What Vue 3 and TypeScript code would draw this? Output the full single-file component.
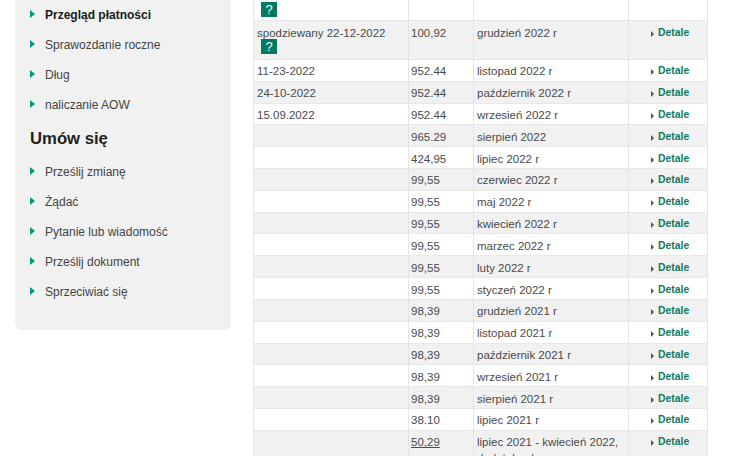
<template>
  <div class="page">
    <div class="scrolled">
      <aside class="side">
        <ul class="menu">
          <li v-for="item in overview" :key="item" :class="{ current: item === 'Przegląd płatności' }">{{ item }}</li>
        </ul>
        <h2>Umów się</h2>
        <ul class="menu">
          <li v-for="item in actions" :key="item">{{ item }}</li>
        </ul>
      </aside>
      <div class="payments">
        <div v-for="(row, i) in rows" :key="i" class="row" :class="{ tall: row.help }">
          <div class="cell">
            {{ row.date }}
            <span v-if="row.help" class="help">?</span>
          </div>
          <div class="cell amount"><span :class="{ under: row.under }">{{ row.amount }}</span></div>
          <div class="cell">{{ row.month }}</div>
          <div class="cell more"><a href="#">Detale</a></div>
        </div>
      </div>
    </div>
  </div>
</template>

<script setup lang="ts">
interface Row {
  date: string;
  amount: string;
  month: string;
  help?: boolean;
  under?: boolean;
}

const overview = ["Przegląd płatności", "Sprawozdanie roczne", "Dług", "naliczanie AOW"];
const actions = ["Prześlij zmianę", "Żądać", "Pytanie lub wiadomość", "Prześlij dokument", "Sprzeciwiać się"];

const rows: Row[] = [
  { date: "spodziewany 24-01-2023", amount: "", month: "", help: true },
  { date: "spodziewany 22-12-2022", amount: "100,92", month: "grudzień 2022 r", help: true },
  { date: "11-23-2022", amount: "952.44", month: "listopad 2022 r" },
  { date: "24-10-2022", amount: "952.44", month: "październik 2022 r" },
  { date: "15.09.2022", amount: "952.44", month: "wrzesień 2022 r" },
  { date: "", amount: "965.29", month: "sierpień 2022" },
  { date: "", amount: "424,95", month: "lipiec 2022 r" },
  { date: "", amount: "99,55", month: "czerwiec 2022 r" },
  { date: "", amount: "99,55", month: "maj 2022 r" },
  { date: "", amount: "99,55", month: "kwiecień 2022 r" },
  { date: "", amount: "99,55", month: "marzec 2022 r" },
  { date: "", amount: "99,55", month: "luty 2022 r" },
  { date: "", amount: "99,55", month: "styczeń 2022 r" },
  { date: "", amount: "98,39", month: "grudzień 2021 r" },
  { date: "", amount: "98,39", month: "listopad 2021 r" },
  { date: "", amount: "98,39", month: "październik 2021 r" },
  { date: "", amount: "98,39", month: "wrzesień 2021 r" },
  { date: "", amount: "98,39", month: "sierpień 2021 r" },
  { date: "", amount: "38.10", month: "lipiec 2021 r" },
  { date: "", amount: "50,29", month: "lipiec 2021 - kwiecień 2022, dodatek urlopowy", under: true }
];
</script>

<style>
html,
body {
  margin: 0;
  background: #fff;
  overflow: hidden;
}
</style>

<style scoped>
.page {
  width: 730px;
  height: 456px;
  overflow: hidden;
  font-family: "Liberation Sans", Arial, sans-serif;
  font-size: 11.5px;
  color: #4a4a4a;
}
.scrolled {
  display: flex;
  align-items: flex-start;
  gap: 22px;
  margin-top: -16px;
  padding-left: 15px;
}
.side {
  box-sizing: border-box;
  flex: none;
  width: 216px;
  height: 346px;
  padding: 22px 15px 0;
  background: #f1f1f1;
  border-radius: 0 0 7px 7px;
}
.menu {
  list-style: none;
  margin: 0;
  padding: 0;
}
.menu li {
  position: relative;
  height: 30.2px;
  padding-left: 15px;
  font-size: 12px;
  line-height: 18px;
  color: #444;
}
.menu:first-child li {
  height: 30px;
}
.menu li::before {
  content: "";
  position: absolute;
  left: 0;
  top: 4px;
  border-left: 5px solid #009a7c;
  border-top: 4px solid transparent;
  border-bottom: 4px solid transparent;
}
.menu li.current {
  font-weight: 700;
  color: #1a1a1a;
}
.side h2 {
  margin: 1px 0 11.5px;
  font-size: 16.7px;
  line-height: 24px;
  font-weight: 700;
  color: #1f1f1f;
}
.payments {
  flex: none;
  width: 455px;
}
.row {
  box-sizing: border-box;
  display: grid;
  grid-template-columns: 155px 65px 155px 80px;
  height: 21.82px;
  border-bottom: 1px solid #e8e8e8;
}
.row:nth-child(even) {
  background: #f1f1f1;
}
.row.tall {
  height: 38.7px;
}
.row:first-child {
  height: 37.3px;
}
.row:last-child {
  height: 40px;
}
.cell {
  padding: 3.4px 3px 0;
  line-height: 16px;
  border-left: 1px solid #e4e4e4;
}
.cell:last-child {
  border-right: 1px solid #e4e4e4;
}
.row:first-child .cell {
  padding-top: 2px;
}
.amount {
  padding-left: 2px;
}
.help {
  display: block;
  box-sizing: border-box;
  width: 16px;
  height: 15px;
  margin: -1.5px 0 0 4px;
  background: #007a60;
  color: #fff;
  font-size: 13px;
  line-height: 15px;
  text-align: center;
}
.row:first-child .help {
  margin-top: 0;
}
.under {
  text-decoration: underline;
}
.more {
  padding-left: 29px;
}
.more a {
  position: relative;
  display: block;
  font-size: 10.4px;
  font-weight: 700;
  line-height: 15px;
  color: #107a60;
  text-decoration: none;
  white-space: nowrap;
}
.more a::before {
  content: "";
  position: absolute;
  left: -7px;
  top: 6px;
  border-left: 3px solid #555;
  border-top: 3px solid transparent;
  border-bottom: 3px solid transparent;
}
</style>
